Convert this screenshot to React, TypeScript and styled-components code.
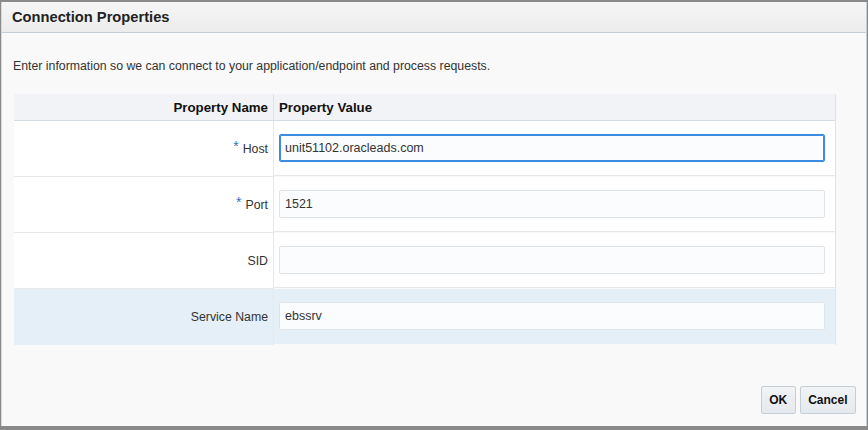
import React from "react";
import styled, { createGlobalStyle } from "styled-components";

const Global = createGlobalStyle`
  html, body { margin: 0; padding: 0; }
  body {
    background: #8a8a8a;
    font-family: "Liberation Sans", Arial, sans-serif;
    font-size: 12px;
    color: #333;
  }
`;

const Page = styled.div`
  width: 868px;
  height: 430px;
  box-sizing: border-box;
  padding: 2px 1px 4px 1px;
  background: #8a8a8a;
  display: flex;
`;

const Dialog = styled.div`
  flex: 1;
  display: flex;
  flex-direction: column;
  background: #f9f9f9;
  border-left: 1px solid #d9d9d9;
  border-right: 1px solid #c4ced7;
  box-sizing: border-box;
`;

const Header = styled.div`
  height: 30px;
  flex: none;
  display: flex;
  align-items: center;
  padding-left: 10px;
  background: linear-gradient(#f6f6f6, #ececec);
  border-bottom: 1px solid #c4ced7;
`;

const Title = styled.h1`
  margin: 0;
  font-size: 14.7px;
  font-weight: bold;
  color: #222;
`;

const Body = styled.div`
  flex: 1;
  display: flex;
  flex-direction: column;
  padding: 26px 0 0 10px;
`;

const Description = styled.p`
  margin: 0 0 21px 1px;
  font-size: 12.3px;
  line-height: 14px;
  color: #333;
`;

const Table = styled.div`
  width: 822px;
  margin-left: 2px;
  box-sizing: border-box;
  border-right: 1px solid #dde3e8;
  display: grid;
  grid-template-columns: 260px 1fr;
`;

const HeadCell = styled.div<{ $align: "left" | "right"; $divider?: boolean }>`
  height: 26px;
  display: flex;
  align-items: center;
  justify-content: ${(p) => (p.$align === "right" ? "flex-end" : "flex-start")};
  padding: ${(p) => (p.$align === "right" ? "0 5px 0 0" : "0 0 0 5px")};
  background: #f1f3f6;
  border-bottom: 1px solid #d3dde5;
  border-right: ${(p) => (p.$divider ? "1px solid #dfe3e7" : "none")};
  font-weight: bold;
  font-size: 13.3px;
  color: #111;
`;

const NameCell = styled.div<{ $selected?: boolean }>`
  height: 55px;
  display: flex;
  align-items: center;
  justify-content: flex-end;
  padding-right: 5px;
  background: ${(p) => (p.$selected ? "#e4eff8" : "#ffffff")};
  border-bottom: ${(p) => (p.$selected ? "1px solid #e4eff8" : "1px solid #e8e8e8")};
  border-right: 1px solid #e8e8e8;
  color: #333;
  font-size: 12.3px;
`;

const ValueCell = styled.div<{ $selected?: boolean }>`
  height: 55px;
  box-sizing: border-box;
  display: flex;
  align-items: flex-start;
  padding: 13px 10px 0 5px;
  background: ${(p) => (p.$selected ? "#e4eff8" : "#ffffff")};
  border-bottom: ${(p) => (p.$selected ? "1px solid #e4eff8" : "1px solid #e8e8e8")};
`;

const Required = styled.span`
  color: #2f73c6;
  font-size: 14px;
  position: relative;
  top: -3px;
  margin-right: 4px;
`;

const Field = styled.input<{ $focused?: boolean }>`
  width: 100%;
  height: 28px;
  box-sizing: border-box;
  margin: 0;
  padding: 0 5px;
  background: #fbfcfd;
  border: ${(p) => (p.$focused ? "1px solid #3a8ce2" : "1px solid #dfe4e8")};
  box-shadow: ${(p) => (p.$focused ? "inset 0 0 0 1px #3a8ce2" : "none")};
  border-radius: 2px;
  font-family: "Liberation Sans", Arial, sans-serif;
  font-size: 12.5px;
  color: #333;
  outline: none;
`;

const Footer = styled.div`
  margin-top: auto;
  display: flex;
  justify-content: flex-end;
  gap: 4px;
  padding: 0 10px 12px 0;
`;

const Button = styled.button`
  height: 28px;
  padding: 0 7.5px;
  border: 1px solid #c4ced7;
  border-radius: 2px;
  background: linear-gradient(#f1f3f5, #e5e9ed);
  font-family: "Liberation Sans", Arial, sans-serif;
  font-size: 12px;
  font-weight: bold;
  color: #111;
`;

type Row = { name: string; value: string; required?: boolean; focused?: boolean; selected?: boolean };

const rows: Row[] = [
  { name: "Host", value: "unit51102.oracleads.com", required: true, focused: true },
  { name: "Port", value: "1521", required: true },
  { name: "SID", value: "" },
  { name: "Service Name", value: "ebssrv", selected: true },
];

export default function App() {
  return (
    <>
      <Global />
      <Page>
        <Dialog>
          <Header>
            <Title>Connection Properties</Title>
          </Header>
          <Body>
            <Description>
              Enter information so we can connect to your application/endpoint and process requests.
            </Description>
            <Table>
              <HeadCell $align="right" $divider>Property Name</HeadCell>
              <HeadCell $align="left">Property Value</HeadCell>
              {rows.map((r) => (
                <React.Fragment key={r.name}>
                  <NameCell $selected={r.selected}>
                    {r.required && <Required>*</Required>}
                    {r.name}
                  </NameCell>
                  <ValueCell $selected={r.selected}>
                    <Field $focused={r.focused} defaultValue={r.value} readOnly />
                  </ValueCell>
                </React.Fragment>
              ))}
            </Table>
            <Footer>
              <Button>OK</Button>
              <Button>Cancel</Button>
            </Footer>
          </Body>
        </Dialog>
      </Page>
    </>
  );
}
